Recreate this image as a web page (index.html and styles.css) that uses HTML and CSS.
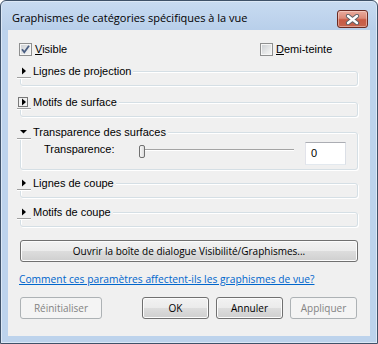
FILE: index.html
```html
<!DOCTYPE html>
<html lang="fr">
<head>
<meta charset="utf-8">
<title>Graphismes de catégories spécifiques à la vue</title>
<link rel="stylesheet" href="styles.css">
</head>
<body>
<div class="win">
  <div class="titlebar">
    <span class="title">Graphismes de catégories spécifiques à la vue</span>
    <span class="close">
      <svg width="15" height="11" viewBox="0 0 15 11"><path d="M3 2 L12 9 M12 2 L3 9" stroke="#5a5f66" stroke-width="4.2" stroke-linecap="round" fill="none"/><path d="M3 2 L12 9 M12 2 L3 9" stroke="#ffffff" stroke-width="2.4" stroke-linecap="round" fill="none"/></svg>
    </span>
  </div>
  <div class="panel">
    <div class="checks">
      <label class="chk first"><span class="box"><svg width="11" height="11" viewBox="0 0 11 11"><path d="M2 5.2 L4.3 8.3 L9 1.8" stroke="#4a5e82" stroke-width="1.8" fill="none"/></svg></span><span><u>V</u>isible</span></label>
      <label class="chk"><span class="box"></span><span><u>D</u>emi-teinte</span></label>
    </div>

    <div class="group g1">
      <div class="ghead"><span class="tog"><svg width="14" height="13" viewBox="0 0 14 13"><polygon points="5,3.5 9,7 5,10.5" fill="#000"/></svg></span><span class="gl">Lignes de projection</span></div>
    </div>

    <div class="group g2">
      <div class="ghead"><span class="tog"><svg width="14" height="13" viewBox="0 0 14 13"><rect x="1.5" y="2.5" width="9" height="9" fill="none" stroke="#000" stroke-width="1" stroke-dasharray="1 1"/><polygon points="5,3.5 9,7 5,10.5" fill="#000"/></svg></span><span class="gl">Motifs de surface</span></div>
    </div>

    <div class="group g3 open">
      <div class="ghead"><span class="tog"><svg width="14" height="13" viewBox="0 0 14 13"><polygon points="3,5 10,5 6.5,8.5" fill="#000"/></svg></span><span class="gl">Transparence des surfaces</span></div>
      <div class="grow">
        <span class="lbl">Transparence:</span>
        <div class="slider"><span class="thumb"></span></div>
        <div class="input">0</div>
      </div>
    </div>

    <div class="group g4">
      <div class="ghead"><span class="tog"><svg width="14" height="13" viewBox="0 0 14 13"><polygon points="5,3.5 9,7 5,10.5" fill="#000"/></svg></span><span class="gl">Lignes de coupe</span></div>
    </div>

    <div class="group g5">
      <div class="ghead"><span class="tog"><svg width="14" height="13" viewBox="0 0 14 13"><polygon points="5,3.5 9,7 5,10.5" fill="#000"/></svg></span><span class="gl">Motifs de coupe</span></div>
    </div>

    <button class="btn wide">Ouvrir la boîte de dialogue Visibilité/Graphismes...</button>

    <a class="link" href="#">Comment ces paramètres affectent-ils les graphismes de vue?</a>

    <div class="btns">
      <button class="btn dis reset">Réinitialiser</button>
      <button class="btn ok">OK</button>
      <button class="btn cancel">Annuler</button>
      <button class="btn dis apply">Appliquer</button>
    </div>
  </div>
</div>
</body>
</html>
```
FILE: styles.css
```css
html, body {
  margin: 0;
  padding: 0;
}
body {
  width: 378px;
  height: 344px;
  overflow: hidden;
  font-family: "Liberation Sans", Arial, sans-serif;
  font-size: 11px;
  color: #000;
}
.win {
  box-sizing: border-box;
  width: 378px;
  height: 344px;
  border: 1px solid #3f5269;
  border-radius: 6px 6px 0 0;
  background: linear-gradient(to bottom, #c8dbf1 0, #b8cfea 29px, #bdd3ec 29px, #bdd3ec 100%);
  box-shadow: inset 0 0 0 1px #dce8f6;
  display: flex;
  flex-direction: column;
}
.titlebar {
  flex: none;
  height: 29px;
  display: flex;
  align-items: flex-start;
}
.title {
  font-family: "Open Sans", "Noto Sans", sans-serif;
  font-size: 11px;
  line-height: 16px;
  margin: 9px 0 0 11px;
  color: #000;
  white-space: nowrap;
}
.close {
  box-sizing: border-box;
  margin: 9px 9px 0 auto;
  width: 31px;
  height: 18px;
  border: 1px solid #6a2a22;
  border-radius: 3px;
  background: linear-gradient(to bottom, #e9ab9e 0%, #dc8a78 45%, #c95a44 55%, #c6654f 100%);
  box-shadow: inset 0 0 0 1px rgba(255, 230, 225, 0.45);
  display: flex;
  align-items: center;
  justify-content: center;
}
.panel {
  flex: 1;
  margin: 0 7px 7px 7px;
  background: #f0f0f0;
  display: flex;
  flex-direction: column;
}
.checks {
  display: flex;
  height: 13px;
  margin: 13px 0 0 11px;
}
.chk {
  display: flex;
  align-items: center;
  gap: 3px;
  line-height: 13px;
  white-space: nowrap;
}
.chk.first {
  width: 241px;
}
.box {
  box-sizing: border-box;
  width: 13px;
  height: 13px;
  border: 1px solid #8e8f8f;
  background: linear-gradient(135deg, #c9ccd0 0%, #eceded 70%, #f4f4f4 100%);
  box-shadow: inset 0 0 0 1px #f6f6f6;
  display: flex;
  align-items: center;
  justify-content: center;
}
.group {
  margin: 15px 12px 0 12px;
  border: 1px solid #d5dfe5;
  border-radius: 3px;
  box-shadow: inset 1px 1px 0 #ffffff, 1px 1px 0 #ffffff;
  padding-bottom: 7px;
}
.g2 { margin-top: 16px; }
.g3 { margin-top: 15px; padding-bottom: 4px; }
.g4 { margin-top: 13px; }
.g5 { margin-top: 14px; }
.ghead {
  display: flex;
  align-items: flex-start;
  width: fit-content;
  height: 14px;
  margin: -8px 0 0 -4px;
  padding-right: 2px;
  background: #f0f0f0;
}
.tog {
  display: block;
  width: 14px;
  height: 13px;
  border-bottom: 1px solid #a0a0a0;
  box-shadow: 0 1px 0 #ffffff;
}
.tog svg {
  display: block;
}
.gl {
  margin-left: 2px;
  line-height: 14px;
  white-space: nowrap;
}
.grow {
  display: flex;
  align-items: flex-start;
  margin-top: 3px;
  padding-left: 23px;
}
.lbl {
  width: 95px;
  margin-top: 1px;
  line-height: 13px;
}
.slider {
  width: 155px;
  height: 13px;
  margin-top: 3px;
  background: linear-gradient(to bottom, transparent 4px, #a4a4a4 4px, #a4a4a4 5px, #ffffff 5px, #ffffff 6px, transparent 6px);
  display: flex;
}
.thumb {
  box-sizing: border-box;
  width: 6px;
  height: 13px;
  border: 1px solid #707070;
  border-radius: 2px;
  background: linear-gradient(to right, #f8f8f8, #dcdcdc);
}
.input {
  box-sizing: border-box;
  margin-left: 11px;
  width: 41px;
  height: 23px;
  border: 1px solid;
  border-color: #abadb3 #dbdfe6 #e3e9ef #e2e3ea;
  background: #ffffff;
  padding-left: 5px;
  line-height: 21px;
}
.btn {
  box-sizing: border-box;
  height: 22px;
  padding: 0;
  border: 1px solid #707070;
  border-radius: 3px;
  background: linear-gradient(to bottom, #f2f2f2 0%, #ebebeb 50%, #dddddd 50%, #cfcfcf 100%);
  box-shadow: inset 0 0 0 1px #fcfcfc;
  font-family: "Open Sans", "Noto Sans", sans-serif;
  font-size: 10px;
  line-height: 20px;
  color: #000;
  text-align: center;
}
.btn.dis {
  border-color: #adb2b5;
  background: #f4f4f4;
  box-shadow: none;
  color: #838383;
}
.wide {
  margin: 13px 12px 0 12px;
}
.link {
  display: block;
  margin: 9px 0 0 11px;
  font-family: "Open Sans", "Noto Sans", sans-serif;
  font-size: 10.25px;
  line-height: 16px;
  color: #0066cc;
  text-decoration: underline;
  white-space: nowrap;
}
.btns {
  display: flex;
  margin: 10px 13px 0 12px;
}
.reset {
  width: 82px;
  margin-right: auto;
}
.ok, .cancel, .apply {
  width: 67px;
}
.ok { margin-right: 7px; }
.cancel { margin-right: 7px; }
```
